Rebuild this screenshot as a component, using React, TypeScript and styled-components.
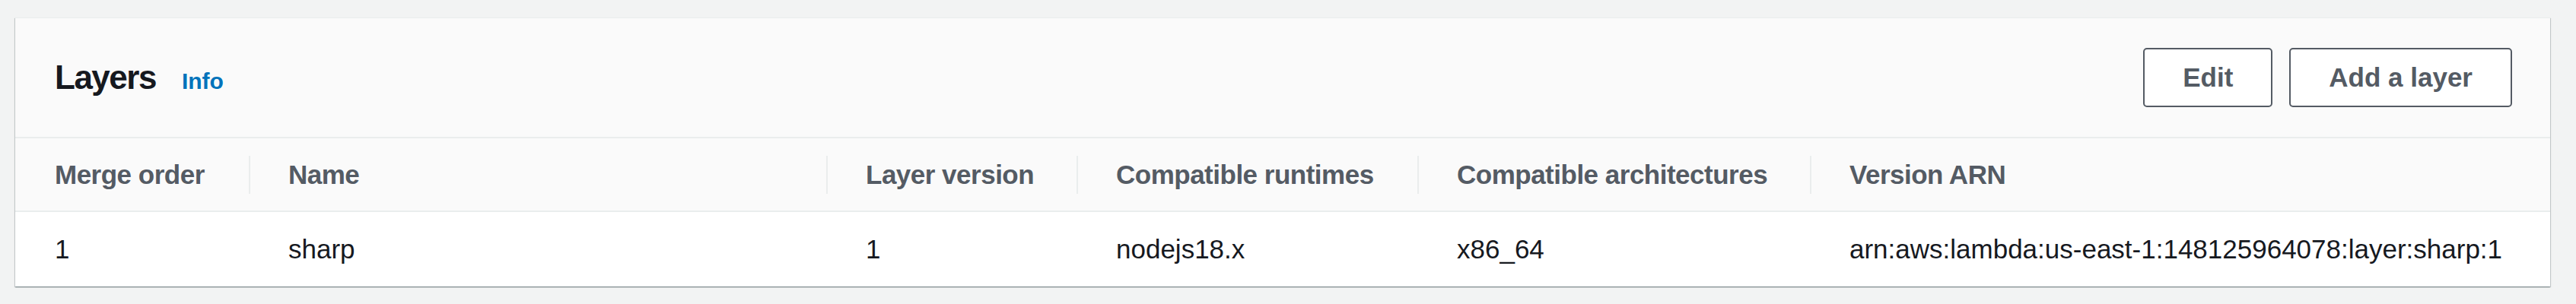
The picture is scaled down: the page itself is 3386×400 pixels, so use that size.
import React from 'react'
import styled, { createGlobalStyle } from 'styled-components'

const FONT = `"Liberation Sans", Arial, sans-serif`

const GlobalStyle = createGlobalStyle`
  html, body { margin: 0; padding: 0; background: #f2f3f3; }
  body { font-family: ${FONT}; color: #16191f; }
`

const Page = styled.div`
  padding: 23px 0 0 20px;
  height: 400px;
  box-sizing: border-box;
`

const Card = styled.section`
  width: 3332px;
  background: #fff;
  border-top: 1px solid #eaeded;
  box-shadow: 0 1px 1px 0 rgba(0, 28, 36, 0.3), 1px 1px 1px 0 rgba(0, 28, 36, 0.15), -1px 1px 1px 0 rgba(0, 28, 36, 0.15);
`

const CardHeader = styled.header`
  height: 158px;
  box-sizing: border-box;
  padding: 0 50px 0 52px;
  display: flex;
  align-items: center;
  justify-content: space-between;
  background: #fafafa;
  border-bottom: 2px solid #eaeded;
`

const TitleGroup = styled.div`
  display: flex;
  align-items: baseline;
  gap: 34px;
`

const Title = styled.h2`
  margin: 0;
  font-size: 44px;
  font-weight: 700;
  letter-spacing: -1.5px;
  color: #16191f;
`

const InfoLink = styled.a`
  font-size: 30px;
  font-weight: 700;
  color: #0073bb;
  text-decoration: none;
`

const Actions = styled.div`
  display: flex;
  gap: 22px;
`

const Button = styled.button`
  height: 78px;
  padding: 0 50px;
  background: #fff;
  border: 2px solid #545b64;
  border-radius: 5px;
  font-family: ${FONT};
  font-size: 35px;
  font-weight: 700;
  color: #545b64;
`

const Row = styled.div<{ $head?: boolean }>`
  display: grid;
  grid-template-columns: 307px 759px 329px 448px 516px 1fr;
  height: ${p => (p.$head ? '95px' : '98px')};
  background: ${p => (p.$head ? '#fafafa' : '#fff')};
  border-bottom: ${p => (p.$head ? '2px solid #eaeded' : 'none')};
`

const HeadCell = styled.div<{ $first?: boolean }>`
  display: flex;
  align-items: center;
  font-size: 35px;
  font-weight: 700;
  letter-spacing: -0.5px;
  color: #545b64;
  white-space: nowrap;
  span {
    display: flex;
    align-items: center;
    height: 50px;
    padding-left: ${p => (p.$first ? '52px' : '50px')};
    border-left: ${p => (p.$first ? 'none' : '2px solid #eaeded')};
  }
`

const Cell = styled.div<{ $first?: boolean }>`
  display: flex;
  align-items: center;
  padding-left: 52px;
  font-size: 35px;
  color: #16191f;
  white-space: nowrap;
`

const columns = ['Merge order', 'Name', 'Layer version', 'Compatible runtimes', 'Compatible architectures', 'Version ARN']

const layers = [
  { order: '1', name: 'sharp', version: '1', runtimes: 'nodejs18.x', arch: 'x86_64', arn: 'arn:aws:lambda:us-east-1:148125964078:layer:sharp:1' },
]

const App: React.FC = () => {
  return (
    <React.Fragment>
      <GlobalStyle />
      <Page>
        <Card>
          <CardHeader>
            <TitleGroup>
              <Title>Layers</Title>
              <InfoLink href="#">Info</InfoLink>
            </TitleGroup>
            <Actions>
              <Button>Edit</Button>
              <Button>Add a layer</Button>
            </Actions>
          </CardHeader>
          <Row $head>
            {columns.map((c, i) => (
              <HeadCell key={c} $first={i === 0}><span>{c}</span></HeadCell>
            ))}
          </Row>
          {layers.map(l => (
            <Row key={l.arn}>
              <Cell>{l.order}</Cell>
              <Cell>{l.name}</Cell>
              <Cell>{l.version}</Cell>
              <Cell>{l.runtimes}</Cell>
              <Cell>{l.arch}</Cell>
              <Cell>{l.arn}</Cell>
            </Row>
          ))}
        </Card>
      </Page>
    </React.Fragment>
  )
}

export default App
